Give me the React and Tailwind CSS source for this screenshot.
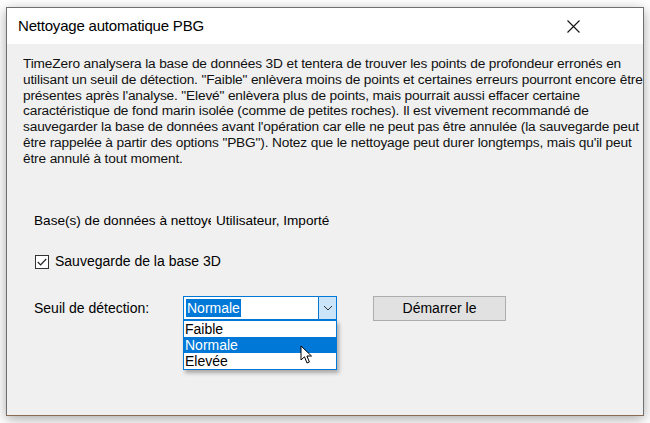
import React from 'react';

const ui = { fontFamily: '"Liberation Sans", Arial, sans-serif' };

const lines = [
  'TimeZero analysera la base de données 3D et tentera de trouver les points de profondeur erronés en',
  'utilisant un seuil de détection. "Faible" enlèvera moins de points et certaines erreurs pourront encore être',
  'présentes après l\'analyse. "Elevé" enlèvera plus de points, mais pourrait aussi effacer certaine',
  'caractéristique de fond marin isolée (comme de petites roches). Il est vivement recommandé de',
  'sauvegarder la base de données avant l\'opération car elle ne peut pas être annulée (la sauvegarde peut',
  'être rappelée à partir des options "PBG"). Notez que le nettoyage peut durer longtemps, mais qu\'il peut',
  'être annulé à tout moment.',
];

const Chevron = () => (
  <svg width="10" height="6" viewBox="0 0 10 6" fill="none">
    <path d="M1 1 L5 5 L9 1" stroke="#333" strokeWidth="1" />
  </svg>
);

const Cursor = () => (
  <svg width="14" height="20" viewBox="0 0 14 20">
    <path
      d="M1 1 L1 15 L4.5 11.8 L7 18 L9.4 17 L6.9 11 L11.5 11 Z"
      fill="#fff"
      stroke="#000"
      strokeWidth="1"
      strokeLinejoin="round"
    />
  </svg>
);

const App = () => {
  const options = ['Faible', 'Normale', 'Elevée'];

  return (
    <div className="w-[650px] h-[423px] bg-white pt-[7px] pl-[6px]" style={ui}>
      <div className="w-[638px] h-[409px] flex flex-col border border-[#6f6f6f] border-b-[#8a6a50] bg-[#f0f0f0] shadow-[0_3px_12px_rgba(0,0,0,0.35)]">
        {/* Title bar */}
        <div className="h-[36px] bg-white flex items-center justify-between pl-[11px] pr-[63px]">
          <span className="text-[15px] text-black tracking-[-0.2px]">Nettoyage automatique PBG</span>
          <svg width="13" height="13" viewBox="0 0 13 13">
            <path d="M0.5 0.5 L12.5 12.5 M12.5 0.5 L0.5 12.5" stroke="#111" strokeWidth="1.1" />
          </svg>
        </div>

        {/* Body */}
        <div className="flex-1 flex flex-col pl-[16px] pt-[12px]">
          <div className="text-[13.7px] leading-[15.8px] text-[#111] tracking-[-0.15px] whitespace-nowrap">
            {lines.map((l) => (
              <div key={l}>{l}</div>
            ))}
          </div>

          {/* label is clipped by its fixed width, as in the original dialog */}
          <div className="flex items-center mt-[46px] pl-[11px] text-[13.6px] text-black h-[18px]">
            <span className="w-[177px] mr-[5px] overflow-hidden whitespace-nowrap">Base(s) de données à nettoyer:</span>
            <span>Utilisateur, Importé</span>
          </div>

          <div className="flex items-center mt-[22px] pl-[12px] h-[18px] text-[14px] text-black">
            <div className="w-[14px] h-[14px] border border-[#333] bg-white flex items-center justify-center">
              <svg width="10" height="8" viewBox="0 0 10 8">
                <path d="M0.8 4 L3.6 6.8 L9.2 1" stroke="#222" strokeWidth="1.2" fill="none" />
              </svg>
            </div>
            <span className="ml-[6px]">Sauvegarde de la base 3D</span>
          </div>

          <div className="flex items-center mt-[25px] pl-[11px] text-[14px] text-black">
            <span className="w-[149px]">Seuil de détection:</span>

            <div className="relative">
              <div className="w-[154px] h-[24px] border border-[#0078d7] bg-white flex items-center">
                <div className="flex-1 pl-[2px]">
                  <span className="bg-[#0078d7] text-white px-[1px] leading-[18px] inline-block">Normale</span>
                </div>
                <div className="w-[18px] h-full bg-[#cce4f7] border-l border-[#0078d7] flex items-center justify-center">
                  <Chevron />
                </div>
              </div>

              {/* Open dropdown list */}
              <div className="absolute left-0 top-[24px] w-[154px] border border-[#0078d7] bg-white shadow-[2px_3px_4px_rgba(0,0,0,0.3)] z-10">
                {options.map((opt) => (
                  <div
                    key={opt}
                    className={
                      opt === 'Normale'
                        ? 'h-[16px] leading-[16px] pl-[1px] bg-[#0078d7] text-white'
                        : 'h-[16px] leading-[16px] pl-[1px] text-black'
                    }
                  >
                    {opt}
                  </div>
                ))}
                <div className="absolute left-[116px] top-[24px]">
                  <Cursor />
                </div>
              </div>
            </div>

            <button className="ml-[36px] w-[133px] h-[25px] bg-[#e1e1e1] border border-[#adadad] text-[14px] text-black">
              Démarrer le
            </button>
          </div>
        </div>
      </div>
    </div>
  );
};

export default App;
